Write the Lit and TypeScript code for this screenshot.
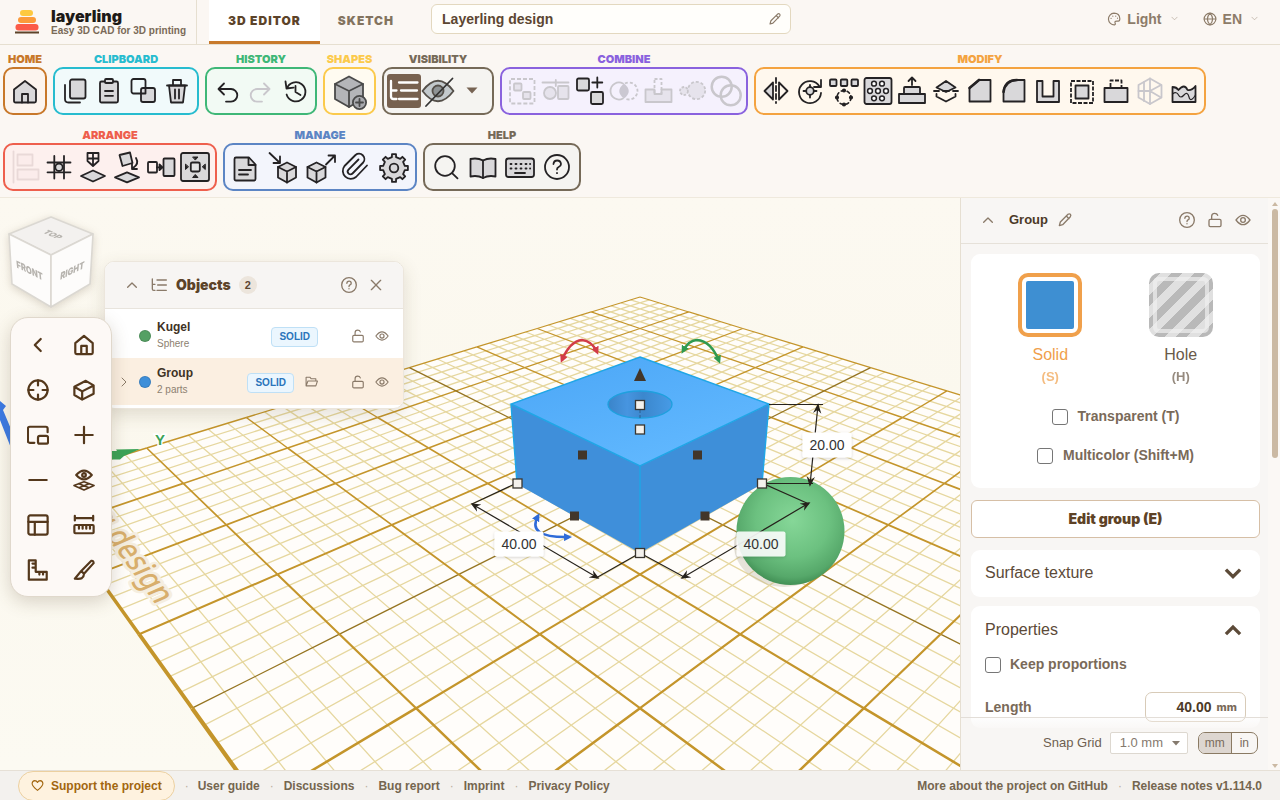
import { LitElement, html, svg, css, TemplateResult, SVGTemplateResult } from "lit";
import { customElement, property, state } from "lit/decorators.js";
import { classMap } from "lit/directives/class-map.js";

interface Tool {
  name: string;
  art: SVGTemplateResult;
  width?: number;
  tone?: "off" | "faint";
}

interface ToolGroup {
  title: string;
  kind: string;
  tools: Tool[];
}

function gearPath(cx: number, cy: number, teeth: number, outer: number, inner: number): string {
  const points: string[] = [];
  const step = (Math.PI * 2) / teeth;
  for (let i = 0; i < teeth; i++) {
    const a = i * step - Math.PI / 2;
    for (const [offset, r] of [[-0.24, inner], [-0.18, outer], [0.18, outer], [0.24, inner]]) {
      const angle = a + offset * step;
      points.push(`${(cx + r * Math.cos(angle)).toFixed(1)} ${(cy + r * Math.sin(angle)).toFixed(1)}`);
    }
  }
  return `M${points.join("L")}z`;
}

/* Toolbar glyphs, drawn on a 34 x 38 field unless a wider one is given. */
const groups: ToolGroup[] = [
  {
    title: "HOME",
    kind: "home",
    tools: [
      { name: "Home", art: svg`<path class="f" d="M6 17.500 17 9l11 8.500V29q0 1.500-1.500 1.500h-19Q6 30.500 6 29z"/><path d="M14 30.500V22h6v8.500"/>` },
    ],
  },
  {
    title: "CLIPBOARD",
    kind: "clipboard",
    tools: [
      { name: "Copy", art: svg`<rect class="f" x="12" y="7.500" width="15.500" height="19" rx="2"/><path d="M7 13v14q0 3.500 3.500 3.500H22"/>` },
      { name: "Paste", art: svg`<rect class="f" x="8" y="9.500" width="18" height="21" rx="1.500"/><rect class="f" x="13" y="7" width="8" height="4" rx="1"/><path d="M13 19h8M13 23.800h8"/>` },
      { name: "Duplicate", art: svg`<rect x="5.500" y="7" width="14" height="14.500" rx="2"/><rect class="f" x="15" y="16" width="14" height="14" rx="2"/><path d="M15 21.500h4.500V16"/>` },
      { name: "Delete", art: svg`<path class="f" d="M9 13.500 11 30.500h12l2-17z"/><path d="M7 13.500h20M13 13.500V8h8v5.500M15 17.500v9M19 17.500v9"/>` },
    ],
  },
  {
    title: "HISTORY",
    kind: "history",
    tools: [
      { name: "Undo", art: svg`<path d="m14 11.500-5.500 5.500 5.500 5.500M8.500 17h12.500a6.300 6.300 0 0 1 0 12.600h-5"/>` },
      { name: "Redo", tone: "off", art: svg`<path d="m20 11.500 5.500 5.500-5.500 5.500M25.500 17H13a6.300 6.300 0 0 0 0 12.600h5"/>` },
      { name: "Version history", art: svg`<path d="M8.800 16.500a9.600 9.600 0 1 1-.2 6M7.500 9.500l1 7 7-.8M17.500 14v6l5 3"/>` },
    ],
  },
  {
    title: "SHAPES",
    kind: "shapes",
    tools: [
      {
        name: "Add shape",
        width: 43,
        art: svg`<g stroke="#4a4a4a"><path fill="#b4b5b8" d="m21 4.500 14 7.500v15l-14 8-14-8V12z"/><path d="m7 12 14 7 14-7M21 19v16"/><circle cx="31.500" cy="30.500" r="6.600" fill="#a9aaae"/><path d="M31.500 27v7M28 30.500h7"/></g>`,
      },
    ],
  },
  {
    title: "VISIBILITY",
    kind: "visibility",
    tools: [
      { name: "Object list", art: svg`<rect y="2" width="34" height="34" rx="3" fill="#77614f" stroke="none"/><g stroke="#fff" stroke-width="2.300"><path d="M4 9v15.500q0 2.500 2.500 2.500h3M4 18.500h5.500M12 10.500h18.500M14 18.500h16M12 27h18.500"/></g>` },
      { name: "Show hidden", art: svg`<g stroke="#55504a"><path fill="#c3c9cc" d="M1.500 19Q17-1.500 32.500 19 17 39.500 1.500 19z"/><circle cx="17" cy="19" r="5.500" fill="#8f9496"/><path stroke="#333" d="M5 34 31.500 6.500"/></g>` },
      { name: "More visibility options", art: svg`<path d="M11.500 15.500h11l-5.500 6z" fill="#766353" stroke="none"/>` },
    ],
  },
  {
    title: "COMBINE",
    kind: "combine",
    tools: [
      { name: "Group", tone: "off", art: svg`<rect x="5" y="7" width="24.500" height="24.500" rx="1" stroke-linecap="butt" stroke-dasharray="4 2"/><rect class="f" x="9" y="11.500" width="7.500" height="7" rx="1"/><rect class="f" x="18" y="20" width="7.500" height="7" rx="1"/>` },
      { name: "Align shapes", tone: "off", art: svg`<path d="M3.500 10.500h26M16.800 8v6"/><circle class="f" cx="11" cy="21" r="6"/><rect class="f" x="19" y="14" width="10.500" height="13" rx="1"/>` },
      { name: "Ungroup", art: svg`<rect class="f" x="4" y="6.500" width="12" height="12" rx="1.500"/><rect class="f" x="18" y="20" width="12" height="12" rx="1.500"/><path d="M24.300 5.500v10M19.300 10.500h10"/>` },
      { name: "Intersect", tone: "off", art: svg`<path fill="#cbc8d2" stroke="none" d="M17 11.500q9.500 7.500 0 15-9.500-7.500 0-15z"/><path d="M16 26.500a8.500 8.500 0 1 1 0-15"/><path d="M18 11.500a8.500 8.500 0 1 1 0 15" stroke-linecap="butt" stroke-dasharray="3 2"/>` },
      { name: "Embed", tone: "off", art: svg`<path class="f" d="M4.500 17.500h9v4.500h7v-4.500h10V30h-26z"/><rect x="13.500" y="7" width="7" height="15" stroke-linecap="butt" stroke-dasharray="3 2"/>` },
      { name: "Hull", tone: "off", art: svg`<g class="f" stroke-linecap="butt"><circle cx="9" cy="19" r="4" stroke-dasharray="2.500 1.500"/><circle cx="21.500" cy="18.500" r="8.700" stroke-dasharray="3 2"/></g>` },
      { name: "Join", tone: "off", art: svg`<g stroke-width="2.500"><circle cx="12.700" cy="14.700" r="10"/><circle cx="21.700" cy="23.300" r="10"/></g>` },
    ],
  },
  {
    title: "MODIFY",
    kind: "modify",
    tools: [
      { name: "Mirror", art: svg`<path class="f" d="M5.500 19 14 10.500v17z"/><path d="M28.500 19 20 10.500v17z"/><path d="M17 6v25" stroke-dasharray="5 3"/>` },
      { name: "Rotate", art: svg`<path d="M26.500 14.500A11 11 0 1 0 28 21M28 8v7h-7"/><circle class="f" cx="17" cy="19" r="3.800"/><path d="M17 13v2M17 23v2.500M10.500 19H13M21 19h2.500"/>` },
      { name: "Pattern", art: svg`<g class="f"><rect x="3" y="7.500" width="6.500" height="6.500" rx="1"/><rect x="13.800" y="7.500" width="6.500" height="6.500" rx="1"/><rect x="24.500" y="7.500" width="6.500" height="6.500" rx="1"/></g><circle cx="17" cy="25.500" r="7" stroke-width="1.600" stroke-dasharray="3 3"/><g class="k"><circle cx="17" cy="18.500" r="1.200"/><circle cx="17" cy="32.500" r="1.200"/><circle cx="10" cy="25.500" r="1.200"/><circle cx="24" cy="25.500" r="1.200"/></g>` },
      { name: "Perforate", art: svg`<rect class="f" x="3.500" y="6" width="27" height="26" rx="2"/><g fill="#fff" stroke-width="1.500">${[[13, 11.700], [21, 11.700], [9, 19], [17, 19], [25, 19], [13, 26.300], [21, 26.300]].map(([x, y]) => svg`<circle cx=${x} cy=${y} r="2.400"/>`)}</g>` },
      { name: "Extrude", art: svg`<path class="f" d="M4 22h26v9H4zM9 22v-6q0-1 1-1h14q1 0 1 1v6"/><path d="M17 13V6M13.500 9 17 5.500 20.500 9"/>` },
      { name: "Split", art: svg`<path class="f" d="M7.500 15.500 17 9l9.500 6.500L17 20z"/><path d="M7.500 22v2.500L17 29.500l9.500-5V22M5 19h5M14 19h6M24 19h5"/>` },
      { name: "Chamfer", art: svg`<path class="f" d="M6.500 29.500V16L16 8h11.500v21.500z"/><path d="M6.500 16 16 8" stroke-width="2.600"/>` },
      { name: "Fillet", art: svg`<path class="f" d="M6.500 29.500V21Q7 8 20 8h7.500v21.500z"/><path d="M6.500 20Q8 8.500 20 8" stroke-width="2.600"/>` },
      { name: "Shell", art: svg`<path class="f" d="M6 9h5.500v15.500h11V9H28v21H6z"/>` },
      { name: "Offset", art: svg`<rect x="6" y="9" width="22" height="22" stroke-linecap="butt" stroke-dasharray="4 1.500"/><rect class="f" x="10.500" y="13.500" width="13" height="13"/>` },
      { name: "Cut out", art: svg`<path class="f" d="M5.500 16h23v14h-23z"/><path d="M11.500 15V8.500h11V15" stroke-linecap="butt" stroke-dasharray="4 1.500"/>` },
      { name: "Lattice", tone: "off", art: svg`<path d="m17 6.500 11.500 6.500v12.500L17 32 5.500 25.500V13z"/><path d="M17 6.500V32M5.500 19H17M11 10v19M17 19l11-6M17 19l11 6.500M28 13 17 19"/>` },
      { name: "Displace", art: svg`<path class="f" d="M5.500 30V15q4 0 6 3 6-7 9 0 4 1 8-4v16z"/><path stroke-width="1.200" d="M5.500 22q4-3 6 1t5.500 0 5 2 6.500-2"/>` },
    ],
  },
  {
    title: "ARRANGE",
    kind: "arrange",
    tools: [
      { name: "Align", tone: "faint", art: svg`<path d="M5.500 3.500v31" /><rect class="f" x="9.500" y="6.500" width="15" height="11"/><rect class="f" x="9.500" y="21.500" width="21" height="10"/>` },
      { name: "Snap to grid", art: svg`<circle class="f" cx="17" cy="19.300" r="3.700"/><path d="M12.300 8v22.500M22 8v22.500M5.500 14.500h23M5.500 24.300h23"/>` },
      { name: "Drop to plane", art: svg`<path d="M11.500 5h11v5.500h-11zM17 5v12M11.500 10.500v2.500L17 18l5.500-5v-2.500"/><path class="f" d="m5 28 12-5.500L29 28l-12 5.500z"/>` },
      { name: "Lay on face", art: svg`<path class="f" d="m9.500 7 10.500-2.500 2.500 10.500-10 3z"/><path d="M26 10q3.500 6-3 10M22 16v5h5"/><path class="f" d="m5 29.300 12-5 12 5-12 5z"/>` },
      { name: "Snap together", art: svg`<rect x="4" y="14" width="9" height="10.500" rx="1"/><path d="M13 19.300h5M15.500 16.500l3 2.800-3 2.800z"/><rect class="f" x="19.500" y="10.500" width="11" height="17.500" rx="1"/>` },
      { name: "Center", art: svg`<rect class="f" x="3" y="5" width="28" height="28" rx="2"/><rect x="12.800" y="14.500" width="9" height="9" rx="1.500" fill="#fff" fill-opacity=".3"/><path class="k" stroke-width="1" d="M15 9h5l-2.500 2.800zM15 29.500h5l-2.500-2.800zM7.500 16.500v5l2.800-2.500zM27.300 16.500v5L24.500 19z"/>` },
    ],
  },
  {
    title: "MANAGE",
    kind: "manage",
    tools: [
      { name: "Notes", art: svg`<path class="f" d="M6.500 11q0-1.500 1.500-1.500h13l6.500 7V31q0 1.500-1.500 1.500H8Q6.500 32.500 6.500 31z"/><path d="M20.500 10v7h7M11 22h12M11 26.500h9"/>` },
      { name: "Import", width: 42, art: svg`<path d="m7.500 5 10.500 10M18 8.500V15h-6.500"/><path class="f" d="m25 14.500 9 4.500v10.500l-9 5-9-5V19z"/><path d="m16 19 9 4.500 9-4.500M25 23.500v11"/>` },
      { name: "Export", art: svg`<path d="M22 16.500 30.500 8M24.500 7.500H31V14"/><path class="f" d="m12.500 14.500 9 4.500v10.500l-9 5-9-5V19z"/><path d="m3.500 19 9 4.500 9-4.500M12.500 23.500v11"/>` },
      { name: "Attachments", art: svg`<path d="m29 17.500-11 11.500a8 8 0 0 1-11.500-11L17.500 7a5.400 5.400 0 0 1 7.700 7.500L14.500 25.500a2.700 2.700 0 0 1-4-3.800L20.500 11.500"/>` },
      { name: "Settings", width: 40, art: svg`<path class="f" d=${gearPath(22, 20, 8, 14, 11)}/><circle cx="22" cy="20" r="4.300"/>` },
    ],
  },
  {
    title: "HELP",
    kind: "help",
    tools: [
      { name: "Search", width: 37, art: svg`<circle cx="17" cy="18" r="9.800"/><path d="m24.300 25.300 5.200 5"/>` },
      { name: "Manual", width: 37, art: svg`<path class="f" d="M5.500 11q7-1.500 12.500 1.500 5.500-3 12.500-1.500v17.500q-7-1.500-12.500 1.500-5.500-3-12.500-1.500z"/><path d="M18 12.500V30"/>` },
      { name: "Keyboard shortcuts", width: 37, art: svg`<rect class="f" x="4" y="10.500" width="28" height="18.500" rx="2.500"/><path d="M8.500 16h1M13.500 16h1M18.500 16h1M23.500 16h1M28 16h.2M8.500 20.500h1M13.500 20.500h1M18.500 20.500h1M23.500 20.500h1M28 20.500h.2M13 25h10"/>` },
      { name: "Help", width: 37, art: svg`<circle cx="18" cy="19" r="12"/><path d="M14.500 16q.3-3.500 3.700-3.500T22 16q0 2-2.300 3-1.700.8-1.700 2.500M18 25v.2"/>` },
    ],
  },
];

@customElement("tool-group")
class ToolGroupElement extends LitElement {
  @property({ attribute: false }) group!: ToolGroup;

  static styles = css`
    :host { display: block; --tone: #766a58; --tint: #f5f4f1; }
    .group { display: flex; flex-direction: column; align-items: center; gap: 2px; }
    .home { --tone: #c8782a; --tint: #fcf4ee; }
    .clipboard { --tone: #27bccf; --tint: #f1fafb; }
    .history { --tone: #3fb777; --tint: #f2faf4; }
    .shapes { --tone: #fbca4c; --tint: #fffbf1; }
    .combine { --tone: #8a62de; --tint: #f5f1fd; }
    .modify { --tone: #f4a340; --tint: #fff8ee; }
    .arrange { --tone: #ee5f4d; --tint: #fdf0ee; }
    .manage { --tone: #5c85c4; --tint: #f3f5fc; }
    .title { font: 900 11px/12px Inter, "Liberation Sans", sans-serif; color: var(--tone); margin: 0; }
    .box { display: flex; align-items: center; padding: 3px; border: 2px solid var(--tone); border-radius: 10px; background: var(--tint); }
    .tool { border: 0; padding: 0; margin: 0; background: none; display: block; height: 38px; }
    .tool svg { display: block; height: 38px; overflow: visible; fill: none; stroke: #242224; stroke-width: 1.8; stroke-linecap: round; stroke-linejoin: round; }
    .f { fill: #d9d8da; }
    .k { fill: #242224; }
    .off svg { stroke: #c9c7cc; }
    .off .f { fill: #e6e3ec; }
    .faint svg { stroke: #e9d9d8; }
    .faint .f { fill: #fbeceb; }
  `;

  render() {
    const g = this.group;
    return html`<section class="group ${g.kind}">
      <h2 class="title">${g.title}</h2>
      <div class="box">
        ${g.tools.map(
          (t) => html`<button class="tool ${t.tone ?? ""}" aria-label=${t.name}>
            <svg width=${t.width ?? 34} viewBox="0 0 ${t.width ?? 34} 38">${t.art}</svg>
          </button>`
        )}
      </div>
    </section>`;
  }
}

/* Ground plane: 8 x 8 major cells seen in perspective. */
const CELLS = 8;
const MINOR = 5;
const ground = (u: number, v: number) => {
  const w = 1 - 0.0488 * (u + v);
  return { x: 640 + (46.4 * (u - v)) / w, y: 6 + 291 / w, w };
};

function gridLines(): SVGTemplateResult[] {
  const minor: string[] = [];
  const major: SVGTemplateResult[] = [];
  const p = (u: number, v: number) => {
    const q = ground(u, v);
    return `${q.x.toFixed(1)} ${q.y.toFixed(1)}`;
  };
  for (let i = 0; i <= CELLS * MINOR; i++) {
    const t = i / MINOR;
    if (i % MINOR) {
      minor.push(`M${p(t, 0)}L${p(t, CELLS)}M${p(0, t)}L${p(CELLS, t)}`);
      continue;
    }
    const axis = t === CELLS / 2;
    const edge = t === CELLS;
    for (let j = 0; j < CELLS; j++) {
      const w = ground(t, j + 0.5).w;
      const width = axis ? 1.3 : Math.min(6, (edge ? 1.5 : 0.95) / w + (edge ? 0.4 : 0.1));
      major.push(svg`<path d="M${p(t, j)}L${p(t, j + 1)}M${p(j, t)}L${p(j + 1, t)}" stroke=${axis ? "#957421" : "#c4952b"} stroke-width=${width.toFixed(2)}/>`);
    }
  }
  return [svg`<path d=${minor.join("")} stroke="#e6d79f" stroke-width="1.300"/>`, ...major];
}

const handle = (x: number, y: number, light: boolean) =>
  svg`<rect x=${x - 4.5} y=${y - 4.5} width="9" height="9" fill=${light ? "#f4f1ec" : "#42362a"} stroke=${light ? "#3a3630" : "#42362a"} stroke-width=${light ? 1.3 : 0}/>`;

const measure = (x: number, y: number, value: string, opacity = 1) => svg`
  <rect x=${x - 24.5} y=${y - 12.5} width="49" height="25" rx="2" fill="#fff" fill-opacity=${opacity} filter="url(#soft)"/>
  <text x=${x} y=${y + 5} text-anchor="middle" font-size="14" fill="#333">${value}</text>`;

@customElement("scene-view")
class SceneView extends LitElement {
  static styles = css`
    :host { display: block; position: absolute; inset: 0; }
    .scene { display: block; width: 100%; height: 100%; font-family: "Liberation Sans", Arial, sans-serif; }
  `;

  render() {
    return html`<svg class="scene" viewBox="0 198 1280 572" preserveAspectRatio="xMidYMid slice" role="img" aria-label="3D view">
      <defs>
        <linearGradient id="sky" x1="0" y1="0" x2="0" y2="1"><stop offset="0" stop-color="#fcf9f1"/><stop offset=".35" stop-color="#fbf8ee"/><stop offset="1" stop-color="#fcfaf2"/></linearGradient>
        <linearGradient id="top" x1="0" y1="0" x2=".7" y2="1"><stop offset="0" stop-color="#4ba6f6"/><stop offset="1" stop-color="#62b9ff"/></linearGradient>
        <linearGradient id="hole" x1="0" y1="0" x2="1" y2="0"><stop offset="0" stop-color="#3a84c9"/><stop offset=".3" stop-color="#4795e0"/><stop offset=".55" stop-color="#3b87cd"/><stop offset="1" stop-color="#479be6"/></linearGradient>
        <radialGradient id="ball" cx=".52" cy=".4" r=".62"><stop offset="0" stop-color="#86d798"/><stop offset=".55" stop-color="#6cc180"/><stop offset=".85" stop-color="#56a86a"/><stop offset="1" stop-color="#3d8a50"/></radialGradient>
        <filter id="soft" x="-20%" y="-30%" width="140%" height="170%"><feDropShadow dx="0" dy="1" stdDeviation="1.500" flood-opacity=".18"/></filter>
        ${["#d23c48", "#2f9a50", "#2f6bd8"].map(
          (c, i) => svg`<marker id="tip${i}" viewBox="0 0 8 8" refX="5" refY="4" markerWidth="8" markerHeight="8" markerUnits="userSpaceOnUse" orient="auto-start-reverse"><path d="M0 0 8 4 0 8z" fill=${c}/></marker>`
        )}
        <marker id="dim" viewBox="0 0 12 10" refX="10" refY="5" markerWidth="10" markerHeight="9" markerUnits="userSpaceOnUse" orient="auto-start-reverse"><path d="M0 0 12 5 0 10 4 5z" fill="#26221c"/></marker>
      </defs>
      <rect x="0" y="198" width="1280" height="572" fill="url(#sky)"/>
      <path d="M640 297 31 483 640 1333 1249 483z" fill="#fffdfa"/>
      <g fill="none">${gridLines()}</g>

      <path d="M0 401l6 5-3 4 8 19v19L0 420z" fill="#3a7ae6"/>
      <path d="M104 451h13l-1-1.500 24-.5-16 7-4 3.500h-16z" fill="#3ca357"/>
      <text x="160" y="445" text-anchor="middle" font-size="15" font-weight="700" fill="#3ca357" stroke="#fff" stroke-width="3" paint-order="stroke">Y</text>
      <text transform="matrix(.53 .73 -.98 .43 156 605)" text-anchor="end" font-size="30" font-family="Noto Sans" font-weight="500" fill="#d8ae6c" stroke="#f5eee0" stroke-width="6" stroke-linejoin="round" paint-order="stroke">Layerling design</text>

      <ellipse cx="784" cy="545" rx="50" ry="42" fill="#b5ae96" opacity=".32"/>
      <circle cx="790.500" cy="531" r="54" fill="url(#ball)"/>

      <path d="M511 404 517 484 640 553V466z" fill="#3f8fda"/>
      <path d="M769 404 762 484 640 553V466z" fill="#3e8fd9"/>
      <path d="m640 357 129 47-129 62-129-62z" fill="url(#top)"/>
      <path d="m640 357 129 47-129 62-129-62zM640 466v87M511 404l6 80M769 404l-7 80" fill="none" stroke="#1fa6e6" stroke-width="1.400"/>
      <ellipse cx="640" cy="404.500" rx="32" ry="13.500" fill="url(#hole)" stroke="#1fa0de" stroke-width="1.300"/>
      <path d="M640 410v10" stroke="#2c5f8c" stroke-dasharray="3 2"/>

      <g fill="none" stroke="#26221c" stroke-width="1.200">
        <path d="M517 483 472 504M640 553 596 578M640 553 686 578M762 483l47 21"/>
        <path d="M472 504 598 578" marker-start="url(#dim)" marker-end="url(#dim)"/>
        <path d="M809 503 682 578" marker-start="url(#dim)" marker-end="url(#dim)"/>
        <path d="M769 404.500h54M762 483.500h51"/>
        <path d="M818 405 810 485" marker-start="url(#dim)" marker-end="url(#dim)"/>
      </g>

      <g fill="none" stroke-width="2.500">
        <path d="M562 360q8-19 20-20 10 1 15 12" stroke="#d23c48" marker-start="url(#tip0)" marker-end="url(#tip0)"/>
        <path d="M683 351q6-11 14-11 14 1 22 21" stroke="#2f9a50" marker-start="url(#tip1)" marker-end="url(#tip1)"/>
        <path d="M538 516q-12 22 31 21" stroke="#2f6bd8" marker-start="url(#tip2)" marker-end="url(#tip2)"/>
      </g>

      ${measure(827, 445, "20.00")}${measure(519, 544, "40.00")}${measure(761, 544, "40.00", 0.88)}
      <path d="m640 368 6 13h-12z" fill="#42362a"/>
      ${[[582.5, 455], [697.5, 455], [574.5, 516], [705, 516]].map(([x, y]) => handle(x, y, false))}
      ${[[640, 405], [640, 429.5], [517.5, 483.5], [762, 483.5], [640, 553]].map(([x, y]) => handle(x, y, true))}
    </svg>`;
  }
}

const line = (art: SVGTemplateResult, size = 16, cls = ""): TemplateResult =>
  html`<svg class="line ${cls}" width=${size} height=${size} viewBox="0 0 24 24" aria-hidden="true">${art}</svg>`;

const glyph = {
  up: svg`<path d="m5.500 15.500 6.500-6.500 6.500 6.500"/>`,
  down: svg`<path d="m5 8.500 7 7 7-7"/>`,
  foldUp: svg`<path d="m3.500 17 8.500-8.500 8.500 8.500"/>`,
  foldDown: svg`<path d="m3.500 8 8.500 8.500L20.500 8"/>`,
  right: svg`<path d="m8 4 8 8-8 8"/>`,
  help: svg`<circle cx="12" cy="12" r="11"/><path d="M8.800 9.500q.2-3.300 3.300-3.300t3.200 3q0 1.800-1.900 2.700-1.400.8-1.400 2.400M12 17.500v.3"/>`,
  close: svg`<path d="M5 5l14 14M19 5 5 19"/>`,
  lock: svg`<rect x="3" y="11" width="18" height="11" rx="2"/><path d="M7 11V6.500Q7 2 11.500 2 15 2 16 5"/>`,
  eye: svg`<path d="M1.500 12Q12-2 22.500 12 12 26 1.500 12z"/><circle cx="12" cy="12" r="3.500"/>`,
  pencil: svg`<path d="M3.500 20.500 5 15 16.500 3.500q2-1.500 3.500 0t0 3.500L8.500 19zM14 6l4 4"/>`,
  folder: svg`<path d="M2 20V4h7l2.500 3H20v4M2 20l3.500-9H23l-3 9z"/>`,
  tree: svg`<path d="M2 3v15q0 2 2 2h2M2 11h4M9 4.500h14M10 12h13M9 20h14"/>`,
  palette: svg`<path d="M12 2a10 10 0 1 0 1 20q2-.5 1-2.500-1.500-4 2.500-4h3q2.500 0 2.500-4Q21.500 2 12 2z"/><path d="M7 11v.1M10 7v.1M15 7v.1M18 10.500v.1"/>`,
  globe: svg`<circle cx="12" cy="12" r="10"/><path d="M2 12h20M12 2q-9 10 0 20 9-10 0-20z"/>`,
  heart: svg`<path d="M12 21Q2 13.500 2 8.500 2.500 3.500 7 3q3.500 0 5 3.500Q13.500 3 17 3q4.500.5 5 5.500 0 5-10 12.500z"/>`,
};

const navigation: { name: string; art: SVGTemplateResult }[] = [
  { name: "Collapse", art: svg`<path d="M15 5.500 8.500 12l6.500 6.500"/>` },
  { name: "Reset view", art: svg`<path d="M2.500 10 12 2l9.500 8v10.500q0 1.500-1.500 1.500H4q-1.500 0-1.500-1.500zM9 22v-9h6v9"/>` },
  { name: "Focus", art: svg`<circle cx="12" cy="12" r="10.500"/><path d="M12 1.500V7M12 17v5.500M1.500 12H7M17 12h5.500"/>` },
  { name: "Perspective", art: svg`<path d="M1.500 8.500 14 2l8.500 5v9L10 22.500l-8.500-5zM1.500 8.500l8.500 5 12.500-6.500M10 13.500v9"/>` },
  { name: "Mini view", art: svg`<path d="M8 20.500H3q-2 0-2-2V5q0-2 2-2h17.500q2 0 2 2v4"/><rect x="12" y="13" width="11" height="8.500" rx="2"/>` },
  { name: "Zoom in", art: svg`<path d="M12 3v18M2.500 12h19"/>` },
  { name: "Zoom out", art: svg`<path d="M2.500 12h19"/>` },
  { name: "Show work plane", art: svg`<path d="M3.500 6.500Q12-3 20.500 6.500 12 16 3.500 6.500z"/><circle cx="12" cy="6.500" r="2"/><path d="m1 18 11-4 11 4-11 5zM6.500 16l11 4.500M17.500 16l-11 4.500" stroke-width="1.700"/>` },
  { name: "Layout", art: svg`<rect x="1.500" y="1.500" width="21" height="21" rx="2"/><path d="M1.500 8.500h21M8.500 8.500v14"/>` },
  { name: "Measure", art: svg`<path d="M2 2v5M22 2v5M2 4.500h20"/><rect x="1.500" y="12" width="21" height="9" rx="1"/><path d="M6.500 12v4M10.500 12v4M14.500 12v4M18.500 12v4"/>` },
  { name: "Ruler", art: svg`<path d="M2 1.500h7.500V14h12v8.500H2zM6 5h3.500M6 9.500h3.500M13.500 14v3M17.500 14v3"/>` },
  { name: "Section", art: svg`<path d="M9 13 20 2q2.500-.5 2.500 2.500L12 16zM9 13l-7 8.500q6 .5 7.500-.5 2.500-2 2.500-5z"/>` },
];

@customElement("app-root")
class AppRoot extends LitElement {
  @state() private design = "Layerling design";

  private objects = [
    { name: "Kugel", detail: "Sphere", color: "#55a064", group: false },
    { name: "Group", detail: "2 parts", color: "#3e8fd9", group: true },
  ];

  static styles = css`
    :host { display: flex; flex-direction: column; height: 100vh; overflow: hidden; background: #fbf7f3; color: #5c4632; font: 14px/18px "Liberation Sans", Arial, sans-serif; }
    * { box-sizing: border-box; }
    button, input, select { font: inherit; color: inherit; margin: 0; }
    button { border: 0; background: none; padding: 0; }
    a { color: inherit; text-decoration: none; }
    h1, h2, h3, p, ul { margin: 0; padding: 0; }
    .line { display: block; flex: none; fill: none; stroke: currentColor; stroke-width: 2; stroke-linecap: round; stroke-linejoin: round; }
    .strong { stroke-width: 4; stroke-linecap: butt; stroke-linejoin: miter; }
    .icon { display: grid; place-items: center; color: #8a7a69; }

    .topbar { flex: none; height: 45px; display: flex; border-bottom: 1px solid #e6dfd0; background: #fbf7f3; }
    .brand { display: flex; align-items: center; gap: 12px; padding: 0 10px 0 14px; border-right: 1px solid #e6dfd0; }
    .brand-name { font: 900 16px/17px Inter, "Liberation Sans", sans-serif; color: #1d1a17; }
    .brand-note { font: 700 10px/12px "Liberation Sans", sans-serif; color: #7a6a58; }
    .tabs { display: flex; margin-left: 12px; }
    .tab { padding: 0 18px; font: 900 12px/40px Inter, "Liberation Sans", sans-serif; letter-spacing: 1px; color: #83735f; border-bottom: 3px solid transparent; }
    .tab.current { background: #fff; color: #5c4329; border-bottom-color: #c87a2c; padding: 0 19px; }
    .name { margin: 4px 0 0 19px; width: 360px; height: 30px; display: flex; align-items: center; border: 1px solid #e3d8bf; border-radius: 6px; background: #fffefb; padding: 0 8px 0 10px; color: #8a7a69; }
    .name-input { flex: 1; min-width: 0; border: 0; padding: 0; outline: 0; background: none; color: #5c4632; font-weight: 700; }
    .prefs { margin-left: auto; display: flex; gap: 24px; height: 37px; padding-right: 21px; }
    .pref { display: flex; align-items: center; gap: 6px; font-weight: 700; color: #8d7c69; }
    .pref .small { margin-left: 2px; opacity: .6; }

    .toolbar { flex: none; display: flex; flex-wrap: wrap; gap: 14px 6px; padding: 8px 3px 6px; border-bottom: 1px solid #efe9dd; }

    .workspace { flex: 1; min-height: 0; position: relative; overflow: hidden; display: flex; justify-content: flex-end; }
    .cube { position: absolute; left: 4px; top: 14px; filter: drop-shadow(0 2px 4px rgba(90, 70, 40, .2)); font-family: Inter, sans-serif; }
    .objects { position: absolute; left: 104px; top: 63px; width: 300px; border: 1px solid #ece6dc; border-radius: 10px; background: #fff; box-shadow: 0 6px 18px rgba(90, 75, 45, .16); overflow: hidden; padding-bottom: 3px; }
    .objects-head { display: flex; align-items: center; height: 47px; padding: 0 19px 1px; background: #f7f5f3; border-bottom: 1px solid #e8e4dd; }
    .objects-title { font: 900 14px/18px Inter, sans-serif; color: #5c4329; margin: 0 8px 0 9px; }
    .badge { font: 700 11px/18px "Liberation Sans", sans-serif; width: 18px; text-align: center; border-radius: 9px; background: #ece5dc; }
    .push { margin-left: auto; }
    .objects-head .icon + .icon { margin-left: 11px; }
    .objects-head .tree { margin-left: 14px; }
    .row { display: grid; grid-template-columns: 34px 16px 1fr auto 34px 42px 24px; align-items: center; height: 47px; padding-right: 9px; }
    .row.plain { height: 49px; padding-top: 4px; }
    .row.selected { background: #fbefe1; }
    .dot { width: 12px; height: 12px; border-radius: 6px; border: 1px solid rgba(0, 0, 0, .12); }
    .object-name { font: 700 12px/16px "Liberation Sans", sans-serif; color: #3f3325; padding-left: 2px; }
    .object-detail { font-size: 10px; line-height: 17px; color: #8d7f70; padding-left: 2px; }
    .tag { font: 700 10px/18px "Liberation Sans", sans-serif; color: #2a74bb; background: #ebf6fe; border: 1px solid #bfe0f6; border-radius: 4px; padding: 0 7px; margin-top: 3px; }
    .row.plain .tag { grid-column: 4 / 6; margin-right: 10px; }
    .row .lock { justify-self: end; padding-right: 5px; }
    .chevron { justify-self: end; margin-right: 9px; }

    .nav { position: absolute; left: 10px; top: 119px; display: grid; grid-template-columns: 46px 46px; grid-auto-rows: 45px; padding: 4px; border: 1px solid #e0d8cc; border-radius: 18px; background: #fdf9f6; box-shadow: 0 5px 18px rgba(90, 75, 45, .22); }
    .nav .icon { color: #54381c; }
    .nav .line { stroke-width: 2.4; }

    .panel { position: relative; width: 25%; min-width: 300px; display: flex; border-left: 1px solid #e6dfd2; background: #f8f6f4; }
    .panel-main { flex: 1; min-width: 0; display: flex; flex-direction: column; }
    .panel-head { flex: none; height: 46px; display: flex; align-items: center; gap: 12px; padding: 0 17px 2px 19px; border-bottom: 1px solid #e6e1d9; }
    .panel-title { font: 700 13px/18px "Liberation Sans", sans-serif; color: #4c3a27; margin: 0 -3px 0 1px; }
    .panel-body { flex: 1; min-height: 0; overflow: hidden; display: flex; flex-direction: column; gap: 12px; padding: 10px 8px 0 10px; }
    .card { flex: none; border-radius: 9px; background: #fff; padding: 14px; }
    .kinds { display: grid; grid-template-columns: 1fr 1fr; padding: 5px 0 18px; }
    .kind { display: flex; flex-direction: column; align-items: center; font-size: 16px; line-height: 20px; color: #6a5a49; }
    .kind.chosen { color: #f0a04b; }
    .swatch { width: 64px; height: 64px; border-radius: 10px; margin-bottom: 8px; padding: 4px; border: 4px solid #f0a04b; background: #fff; }
    .fill { display: block; height: 48px; border-radius: 2px; background: #3e8fd2; }
    .hole .swatch { border-color: transparent; background: repeating-linear-gradient(135deg, #b9b9b9 0 8px, #e0e0e0 8px 16px) border-box; }
    .hole .fill { background: none; box-shadow: 0 0 0 4px rgba(240, 240, 240, .7); }
    .key { font: 700 13px/24px "Liberation Sans", sans-serif; opacity: .7; }
    .check { display: flex; align-items: center; justify-content: center; gap: 10px; font-weight: 700; line-height: 19px; color: #7a6a59; }
    .check + .check { margin-top: 20px; }
    .kinds ~ .check:last-child { margin-bottom: 9px; }
    .tick { appearance: none; width: 16px; height: 16px; border: 1px solid #767676; border-radius: 3px; background: #fff; }
    .edit { flex: none; height: 38px; border: 1px solid #d6bfa6; border-radius: 6px; background: #fff; font: 900 14px/18px Inter, "Liberation Sans", sans-serif; color: #5e4225; }
    .fold { display: flex; width: 100%; align-items: center; justify-content: space-between; font-size: 16px; line-height: 20px; color: #5c4a38; padding-right: 3px; }
    .card.surface { padding: 13px 14px 14px; }
    .props { margin-top: -3px; }
    .props .check { justify-content: flex-start; margin-top: 15px; gap: 9px; }
    .field { display: flex; align-items: center; justify-content: space-between; font-weight: 700; color: #7a6a59; margin-top: 18px; margin-bottom: -8px; }
    .field-box { display: flex; align-items: center; gap: 5px; width: 101px; height: 30px; border: 1px solid #d8cbb8; border-radius: 7px; padding: 0 8px 0 10px; background: #fff; }
    .field-input { flex: 1; width: 0; border: 0; padding: 0; outline: 0; text-align: right; font: 700 14px/18px "Liberation Sans", sans-serif; color: #4c3a27; background: none; }
    .unit { font: 800 11px/18px Inter, sans-serif; color: #7a6a59; }
    .dock { position: absolute; left: 0; right: 0; bottom: 0; height: 53px; display: flex; align-items: center; justify-content: flex-end; gap: 10px; padding: 0 22px 2px 0; border-top: 1px solid #e3ded8; background: linear-gradient(rgba(248, 246, 244, .2), #f8f6f4 14px); color: #6e5f50; }
    .snap { display: flex; align-items: center; gap: 8px; font-size: 13px; }
    .select { display: flex; align-items: center; width: 78px; height: 22px; border: 1px solid #ddd8d0; border-radius: 2px; background: #fff; color: #857a6e; }
    .select-input { appearance: none; border: 0; padding: 0 0 0 9px; outline: 0; background: none; width: 61px; font-size: 13px; }
    .units { display: flex; height: 22px; border: 1px solid #8a7a63; border-radius: 7px; overflow: hidden; font-size: 12px; }
    .units button { padding: 0 8px; color: #7a6c5c; }
    .units .on { background: #ddd6d0; border-right: 1px solid #8a7a63; padding: 0 6px; }
    .rail { flex: none; width: 12px; padding: 4px 2px 2px 4px; display: flex; flex-direction: column; align-items: center; justify-content: space-between; background: #fbf8f5; z-index: 1; }
    .thumb { width: 6px; height: 249px; border-radius: 3px; background: #cbb9a3; margin: 3px 0 auto; }
    .arrow { width: 0; border: 3px solid transparent; border-top: 0; border-bottom: 4px solid #cbb9a3; }
    .arrow.low { border-top: 4px solid #cbb9a3; border-bottom: 0; }

    .footer { flex: none; height: 30px; display: flex; align-items: center; padding: 0 18px; border-top: 1px solid #e6e0d6; background: #f3f1ee; font: 700 12px/18px "Liberation Sans", sans-serif; color: #75664f; }
    .footer a + a::before { content: "·"; color: #b9ae9d; padding: 0 10px; font-weight: 400; }
    .support { display: flex; align-items: center; height: 30px; padding: 0 12px; gap: 7px; border: 1px solid #ecd0a0; border-radius: 15px; background: #fef2df; color: #a2660f; }
    .links { display: flex; }
    .links::before { content: "·"; color: #b9ae9d; padding: 0 9px 0 10px; font-weight: 400; }
    .about { margin-left: auto; display: flex; }
  `;

  private renderCube() {
    return html`<svg class="cube" width="94" height="100" viewBox="4 212 94 100" role="img" aria-label="View cube">
      <g stroke="#dbd8d2" stroke-width="1.600" stroke-linejoin="round">
        <path d="m51 217 42 17-42 21-42-21z" fill="#f3f1ef"/>
        <path d="m9 234 42 21v52L12 284z" fill="#fdfcfb"/>
        <path d="M93 234 51 255v52l39-23z" fill="#fdfcfb"/>
      </g>
      <g font-size="10" font-weight="900" fill="#b7b4af" text-anchor="middle">
        <text transform="matrix(.75 .34 -.8 .4 50 236)">TOP</text>
        <text transform="matrix(.76 .38 .1 1 30 274)">FRONT</text>
        <text transform="matrix(.76 -.38 -.1 1 72 274)">RIGHT</text>
      </g>
    </svg>`;
  }

  private renderObjects() {
    return html`<section class="objects">
      <header class="objects-head">
        <button class="icon" aria-label="Collapse objects">${line(glyph.up)}</button>
        <span class="icon tree">${line(glyph.tree)}</span>
        <h2 class="objects-title">Objects</h2>
        <span class="badge">${this.objects.length}</span>
        <button class="icon push" aria-label="Help">${line(glyph.help)}</button>
        <button class="icon" aria-label="Close">${line(glyph.close)}</button>
      </header>
      ${this.objects.map(
        (o) => html`<div class=${classMap({ row: true, selected: o.group, plain: !o.group })}>
          <span class="icon chevron">${o.group ? line(glyph.right, 12) : null}</span>
          <span class="dot" style="background:${o.color}"></span>
          <div><p class="object-name">${o.name}</p><p class="object-detail">${o.detail}</p></div>
          <span class="tag">SOLID</span>
          ${o.group ? html`<button class="icon" aria-label="Open group">${line(glyph.folder, 13)}</button>` : null}
          <button class="icon lock" aria-label="Lock">${line(glyph.lock, 14)}</button>
          <button class="icon" aria-label="Hide">${line(glyph.eye, 14)}</button>
        </div>`
      )}
    </section>`;
  }

  private renderPanel() {
    return html`<aside class="panel">
      <div class="panel-main">
        <header class="panel-head">
          <button class="icon" aria-label="Collapse">${line(glyph.up)}</button>
          <h2 class="panel-title">Group</h2>
          <button class="icon" aria-label="Rename">${line(glyph.pencil)}</button>
          <button class="icon push" aria-label="Help">${line(glyph.help)}</button>
          <button class="icon" aria-label="Lock">${line(glyph.lock)}</button>
          <button class="icon" aria-label="Hide">${line(glyph.eye)}</button>
        </header>
        <div class="panel-body">
          <section class="card">
            <div class="kinds">
              <button class="kind chosen"><span class="swatch"><span class="fill"></span></span>Solid<span class="key">(S)</span></button>
              <button class="kind hole"><span class="swatch"><span class="fill"></span></span>Hole<span class="key">(H)</span></button>
            </div>
            <label class="check"><input class="tick" type="checkbox" />Transparent (T)</label>
            <label class="check"><input class="tick" type="checkbox" />Multicolor (Shift+M)</label>
          </section>
          <button class="edit">Edit group (E)</button>
          <section class="card surface"><button class="fold">Surface texture ${line(glyph.foldDown, 20, "strong")}</button></section>
          <section class="card props">
            <button class="fold">Properties ${line(glyph.foldUp, 20, "strong")}</button>
            <label class="check"><input class="tick" type="checkbox" />Keep proportions</label>
            <label class="field">Length <span class="field-box"><input class="field-input" value="40.00" /><span class="unit">mm</span></span></label>
          </section>
        </div>
      </div>
      <div class="dock">
        <label class="snap">Snap Grid
          <span class="select"><select class="select-input"><option>1.0 mm</option></select><svg width="8" height="5" viewBox="0 0 8 5"><path d="M0 0h8L4 4.500z" fill="#857a6e"/></svg></span>
        </label>
        <div class="units"><button class="on">mm</button><button>in</button></div>
      </div>
      <div class="rail"><span class="arrow"></span><span class="thumb"></span><span class="arrow low"></span></div>
    </aside>`;
  }

  render() {
    return html`
      <header class="topbar">
        <div class="brand">
          <svg width="25" height="26" viewBox="0 0 25 26" aria-hidden="true">
            <rect x="6" y="1" width="13" height="6" rx="3" fill="#fdc93f"/><rect x="4" y="8" width="18" height="6" rx="3" fill="#fb9b3a"/><rect x="1.500" y="15" width="23" height="6.500" rx="3" fill="#fb5b48"/><path d="M1 23.500h24" stroke="#5c4329" stroke-width="2"/>
          </svg>
          <div><h1 class="brand-name">layerling</h1><p class="brand-note">Easy 3D CAD for 3D printing</p></div>
        </div>
        <nav class="tabs"><button class="tab current">3D EDITOR</button><button class="tab">SKETCH</button></nav>
        <label class="name"><input class="name-input" aria-label="Design name" .value=${this.design} />${line(glyph.pencil, 14)}</label>
        <div class="prefs">
          <button class="pref">${line(glyph.palette, 14)}Light${line(glyph.down, 9, "small")}</button>
          <button class="pref">${line(glyph.globe, 14)}EN${line(glyph.down, 9, "small")}</button>
        </div>
      </header>
      <div class="toolbar">${groups.map((g) => html`<tool-group .group=${g}></tool-group>`)}</div>
      <main class="workspace">
        <scene-view></scene-view>
        ${this.renderCube()} ${this.renderObjects()}
        <div class="nav">${navigation.map((n) => html`<button class="icon" aria-label=${n.name}>${line(n.art, 22)}</button>`)}</div>
        ${this.renderPanel()}
      </main>
      <footer class="footer">
        <a class="support" href="#">${line(glyph.heart, 13)}Support the project</a>
        <div class="links">
          <a href="#">User guide</a><a href="#">Discussions</a><a href="#">Bug report</a><a href="#">Imprint</a><a href="#">Privacy Policy</a>
        </div>
        <div class="about"><a href="#">More about the project on GitHub</a><a href="#">Release notes v1.114.0</a></div>
      </footer>
    `;
  }
}
